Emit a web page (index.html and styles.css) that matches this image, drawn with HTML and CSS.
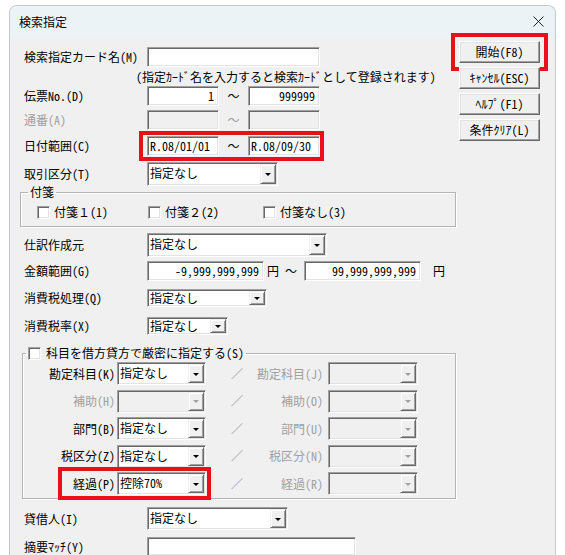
FILE: index.html
```html
<!DOCTYPE html>
<html lang="ja">
<head>
<meta charset="utf-8">
<title>検索指定</title>
<link rel="stylesheet" href="styles.css">
</head>
<body>
<div class="window">
  <div class="titlebar">
    <span class="title">検索指定</span>
    <svg class="close" width="11" height="11" viewBox="0 0 11 11"><path d="M0.5 0.5 L10.5 10.5 M10.5 0.5 L0.5 10.5" stroke="#1f1f1f" stroke-width="1" fill="none"/></svg>
  </div>
  <div class="content">
    <div class="form">
      <div class="row r-name">
        <span class="label">検索指定カード名(M)</span>
        <span class="edit w-name"></span>
      </div>
      <div class="note">(指定ｶｰﾄﾞ名を入力すると検索ｶｰﾄﾞとして登録されます)</div>
      <div class="row r-den">
        <span class="label">伝票No.(D)</span>
        <span class="edit w-num num">1</span>
        <span class="tilde fw">～</span>
        <span class="edit w-num num">999999</span>
      </div>
      <div class="row r-ban">
        <span class="label disabled">通番(A)</span>
        <span class="edit w-num off"></span>
        <span class="tilde fw disabled">～</span>
        <span class="edit w-num off"></span>
      </div>
      <div class="row r-date">
        <span class="label">日付範囲(C)</span>
        <span class="mark date-mark">
          <span class="edit w-num txt">R.08/01/01</span>
          <span class="tilde fw">～</span>
          <span class="edit w-num txt">R.08/09/30</span>
        </span>
      </div>
      <div class="row r-tori">
        <span class="label">取引区分(T)</span>
        <span class="combo w-tori"><span class="val">指定なし</span><span class="drop"><i class="tri"></i></span></span>
      </div>
      <fieldset class="group g-fusen">
        <legend class="lg-fusen">付箋</legend>
        <div class="checks">
          <span class="chk c1"><span class="cb"></span>付箋<span class="fw">１</span>(1)</span>
          <span class="chk c2"><span class="cb"></span>付箋<span class="fw">２</span>(2)</span>
          <span class="chk c3"><span class="cb"></span>付箋なし(3)</span>
        </div>
      </fieldset>
      <div class="row r-shiwake">
        <span class="label">仕訳作成元</span>
        <span class="combo w-shiwake"><span class="val">指定なし</span><span class="drop"><i class="tri"></i></span></span>
      </div>
      <div class="row r-kin">
        <span class="label">金額範囲(G)</span>
        <span class="edit w-kin num">-9,999,999,999</span>
        <span class="yen y1">円</span>
        <span class="tilde2 fw">～</span>
        <span class="edit w-kin num">99,999,999,999</span>
        <span class="yen y2">円</span>
      </div>
      <div class="row r-zei">
        <span class="label">消費税処理(Q)</span>
        <span class="combo short w-zei"><span class="val">指定なし</span><span class="drop"><i class="tri"></i></span></span>
      </div>
      <div class="row r-ritsu">
        <span class="label">消費税率(X)</span>
        <span class="combo short w-ritsu"><span class="val">指定なし</span><span class="drop"><i class="tri"></i></span></span>
      </div>
      <fieldset class="group g-kamoku">
        <legend class="lg-kamoku"><span class="cb"></span>科目を借方貸方で厳密に指定する(S)</legend>
        <div class="krow">
          <span class="klabel">勘定科目(K)</span>
          <span class="combo kc"><span class="val">指定なし</span><span class="drop"><i class="tri"></i></span></span>
          <span class="slash fw">／</span>
          <span class="klabel2 disabled">勘定科目(J)</span>
          <span class="combo kc2 off"><span class="val"></span><span class="drop"><i class="tri"></i></span></span>
        </div>
        <div class="krow">
          <span class="klabel disabled">補助(H)</span>
          <span class="combo kc off"><span class="val"></span><span class="drop"><i class="tri"></i></span></span>
          <span class="slash fw">／</span>
          <span class="klabel2 disabled">補助(O)</span>
          <span class="combo kc2 off"><span class="val"></span><span class="drop"><i class="tri"></i></span></span>
        </div>
        <div class="krow">
          <span class="klabel">部門(B)</span>
          <span class="combo kc"><span class="val">指定なし</span><span class="drop"><i class="tri"></i></span></span>
          <span class="slash fw">／</span>
          <span class="klabel2 disabled">部門(U)</span>
          <span class="combo kc2 off"><span class="val"></span><span class="drop"><i class="tri"></i></span></span>
        </div>
        <div class="krow">
          <span class="klabel">税区分(Z)</span>
          <span class="combo kc"><span class="val">指定なし</span><span class="drop"><i class="tri"></i></span></span>
          <span class="slash fw">／</span>
          <span class="klabel2 disabled">税区分(N)</span>
          <span class="combo kc2 off"><span class="val"></span><span class="drop"><i class="tri"></i></span></span>
        </div>
        <div class="krow">
          <span class="mark keika-mark">
            <span class="klabel">経過(P)</span>
            <span class="combo kc"><span class="val">控除70%</span><span class="drop"><i class="tri"></i></span></span>
          </span>
          <span class="slash fw">／</span>
          <span class="klabel2 disabled">経過(R)</span>
          <span class="combo kc2 off"><span class="val"></span><span class="drop"><i class="tri"></i></span></span>
        </div>
      </fieldset>
      <div class="row r-tai">
        <span class="label">貸借人(I)</span>
        <span class="combo w-tai"><span class="val">指定なし</span><span class="drop"><i class="tri"></i></span></span>
      </div>
      <div class="row r-teki">
        <span class="label">摘要ﾏｯﾁ(Y)</span>
        <span class="edit w-teki"></span>
      </div>
    </div>
    <div class="buttons">
      <span class="btn start">開始(F8)</span>
      <span class="btn">ｷｬﾝｾﾙ(ESC)</span>
      <span class="btn">ﾍﾙﾌﾟ(F1)</span>
      <span class="btn">条件ｸﾘｱ(L)</span>
    </div>
  </div>
</div>
</body>
</html>
```
FILE: styles.css
```css
html, body {
  margin: 0;
  padding: 0;
  background: #ffffff;
}
body {
  font-family: "Noto Sans CJK JP", "Noto Sans", sans-serif;
  font-size: 12px;
  line-height: 14px;
  color: #000;
  font-feature-settings: "hwid" 1;
}
.fw {
  font-feature-settings: normal;
}
.window {
  margin: 5px 0 0 9px;
  width: 545px;
  height: 560px;
  border: 1px solid #c5c9cd;
  border-bottom: none;
  border-radius: 8px 8px 0 0;
  overflow: hidden;
  background: #f0f0f0;
}
.titlebar {
  height: 31px;
  background: #ebf3f7;
  display: flex;
  align-items: center;
  justify-content: space-between;
  padding: 0 11px 0 9px;
}
.title {
  font-size: 12px;
  color: #000;
  font-feature-settings: normal;
}
.close {
  display: block;
}
.content {
  display: flex;
  align-items: flex-start;
}
.form {
  width: 436px;
  padding: 10px 0 0 10px;
  display: flex;
  flex-direction: column;
}
.row {
  display: flex;
  align-items: center;
  margin-left: 4px;
  height: 20px;
}
.label {
  width: 123px;
  flex: none;
  white-space: nowrap;
}
.disabled {
  color: #a0a0a0;
}
.note {
  height: 19px;
  line-height: 19px;
  padding-left: 116px;
  white-space: nowrap;
}
.r-ban { margin-top: 4px; }
.r-date { margin-top: 6px; }
.r-tori { margin-top: 6px; height: 24px; }
.r-shiwake { margin-top: 6px; height: 24px; }
.r-kin { margin-top: 4px; height: 20px; }
.r-zei { margin-top: 8px; height: 18px; }
.r-ritsu { margin-top: 10px; height: 18px; }
.r-tai { margin-top: 8px; height: 23px; }
.r-teki { margin-top: 7px; height: 19px; }

/* sunken edit box */
.edit {
  box-sizing: border-box;
  height: 20px;
  background: #fff;
  border: 1px solid;
  border-color: #a0a0a0 #ffffff #ffffff #a0a0a0;
  box-shadow: inset 1px 1px 0 #696969, inset -1px -1px 0 #e3e3e3;
  display: flex;
  align-items: center;
  padding: 0 4px 0 2px;
  white-space: nowrap;
  flex: none;
}
.edit.off {
  background: #f0f0f0;
}
.num { justify-content: flex-end; }
.w-name { width: 173px; }
.w-num { width: 72px; }
.w-kin { width: 117px; }
.w-teki { width: 209px; height: 19px; }
.tilde {
  width: 29px;
  text-align: center;
  flex: none;
}
.yen.y1 { margin-left: 3px; }
.tilde2 { margin: 0 7px 0 6px; }
.yen.y2 { margin-left: 12px; }

/* red markers */
.mark {
  display: flex;
  align-items: center;
  border: 4px solid #e8101a;
}
.date-mark {
  padding: 1px 0 1px 4px;
  margin: -5px -4px -5px -8px;
}

/* combo */
.combo {
  box-sizing: border-box;
  height: 24px;
  background: #fff;
  border: 1px solid;
  border-color: #a0a0a0 #ffffff #ffffff #a0a0a0;
  box-shadow: inset 1px 1px 0 #696969, inset -1px -1px 0 #e3e3e3;
  display: flex;
  justify-content: space-between;
  padding: 1px;
  flex: none;
}
.combo.off { background: #f0f0f0; }
.combo.short { height: 18px; }
.val {
  padding: 2px 0 0 1px;
  white-space: nowrap;
}
.short .val { padding-top: 0; }
.drop {
  box-sizing: border-box;
  width: 16px;
  background: #f0f0f0;
  border: 1px solid;
  border-color: #f0f0f0 #696969 #696969 #f0f0f0;
  box-shadow: inset 1px 1px 0 #fff, inset -1px -1px 0 #a0a0a0;
  display: flex;
  align-items: center;
  justify-content: center;
}
.tri {
  display: block;
  width: 0;
  height: 0;
  border-left: 3px solid transparent;
  border-right: 3px solid transparent;
  border-top: 3px solid #000;
  margin-top: 1px;
}
.off .tri { border-top-color: #a0a0a0; }
.w-tori { width: 131px; }
.w-shiwake { width: 180px; }
.w-zei { width: 120px; }
.w-ritsu { width: 81px; }
.w-tai { width: 141px; height: 23px; }

/* groups */
.group {
  margin: 0;
  padding: 0;
  border: 1px solid #b4b4b4;
  box-shadow: inset 1px 1px 0 #fff, 1px 1px 0 #fff;
  min-width: 0;
}
.group legend {
  padding: 0 2px;
}
.g-fusen {
  margin-top: -1px;
  width: 436px;
  box-sizing: border-box;
  height: 42px;
}
.lg-fusen { margin-left: 7px; }
.checks {
  display: flex;
  height: 26px;
  align-items: center;
}
.chk {
  display: flex;
  align-items: center;
  white-space: nowrap;
}
.c1 { margin-left: 16px; }
.c2 { margin-left: 40px; }
.c3 { margin-left: 44px; }
.cb {
  box-sizing: border-box;
  width: 13px;
  height: 13px;
  background: #fff;
  border: 1px solid;
  border-color: #a0a0a0 #ffffff #ffffff #a0a0a0;
  box-shadow: inset 1px 1px 0 #696969, inset -1px -1px 0 #e3e3e3;
  margin-right: 4px;
  flex: none;
}
.g-kamoku {
  margin: 11px 0 0 2px;
  width: 434px;
  box-sizing: border-box;
  height: 153px;
}
.lg-kamoku {
  margin-left: 3px;
  display: flex;
  align-items: center;
}
.lg-kamoku .cb { margin-right: 5px; }
.krow {
  display: flex;
  align-items: center;
  height: 27.5px;
}
.klabel {
  width: 94px;
  box-sizing: border-box;
  padding-right: 2px;
  text-align: right;
  white-space: nowrap;
  flex: none;
}
.keika-mark {
  margin: -5px 0 -5px 35px;
  padding: 1px 1px 1px 0;
}
.keika-mark .klabel { width: 55px; }
.kc { width: 89px; height: 23px; }
.slash {
  width: 20px;
  margin-left: 21px;
  text-align: center;
  color: #a0a0a0;
  flex: none;
}
.keika-mark + .slash { margin-left: 16px; }
.klabel2 {
  width: 81px;
  box-sizing: border-box;
  padding-right: 5px;
  text-align: right;
  white-space: nowrap;
  flex: none;
}
.kc2 { width: 90px; height: 23px; }

/* buttons */
.buttons {
  margin-left: 3px;
  padding-top: 4px;
  display: flex;
  flex-direction: column;
  gap: 4px;
  width: 81px;
}
.btn {
  box-sizing: border-box;
  width: 81px;
  height: 22px;
  background: #f0f0f0;
  border: 1px solid;
  border-color: #ffffff #696969 #696969 #ffffff;
  box-shadow: inset -1px -1px 0 #a0a0a0, inset 1px 1px 0 #e3e3e3;
  display: flex;
  align-items: center;
  justify-content: center;
  white-space: nowrap;
}
.btn.start {
  outline: 4px solid #e8101a;
  outline-offset: 4px;
}
```
